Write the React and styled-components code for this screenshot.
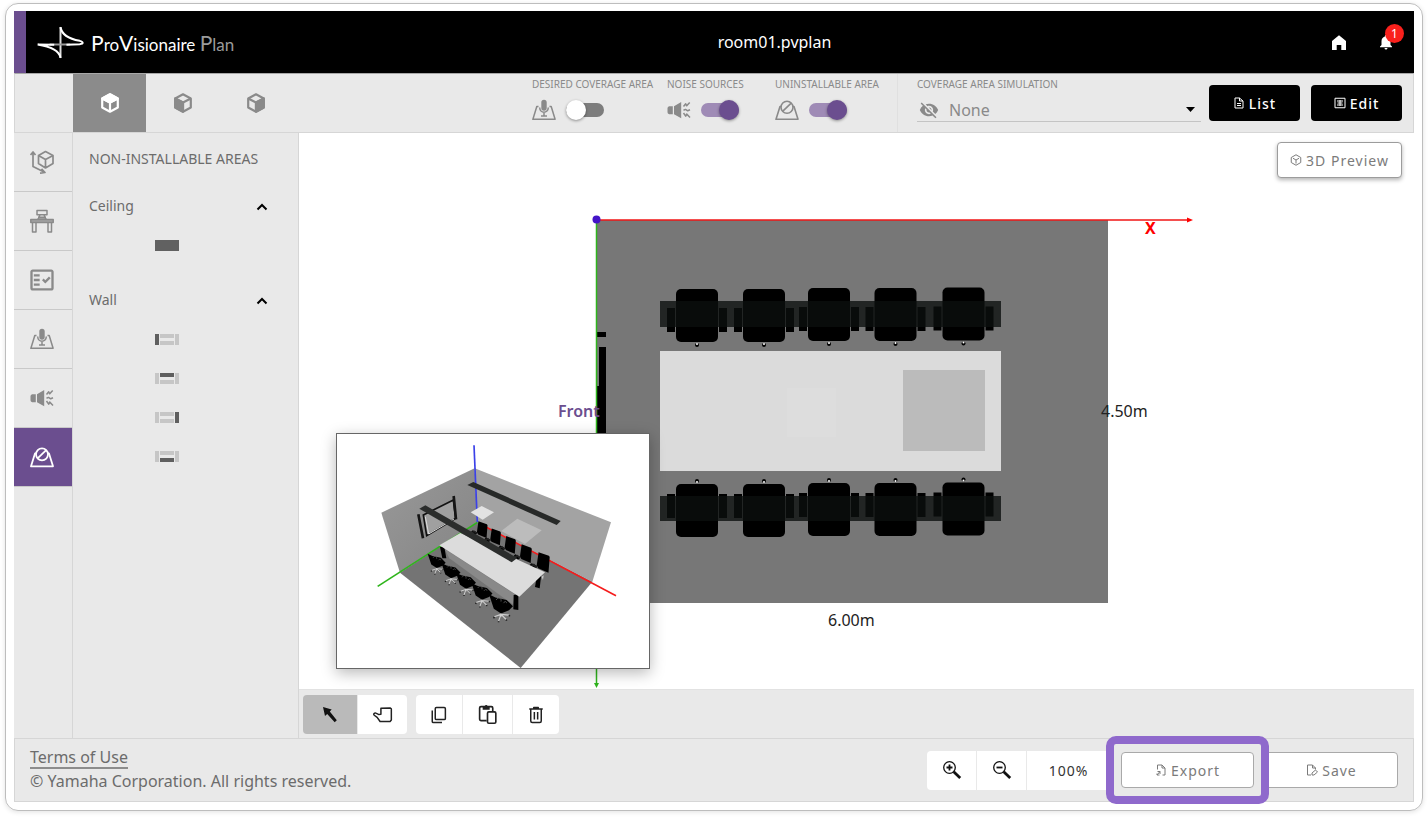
import React, { useState } from "react";
import styled, { createGlobalStyle, css } from "styled-components";
import { MdVisibilityOff, MdNotifications, MdOutlineFactCheck } from "react-icons/md";

const color = {
  purple: "#6b4e8f",
  highlight: "#8f69cc",
  panel: "#e9e9e9",
  line: "#d6d6d6",
  muted: "#8a8a8a",
  text: "#6c6c6c",
};

const GlobalStyle = createGlobalStyle`
  *, *::before, *::after { box-sizing: border-box; }
  body {
    margin: 0;
    background: #fff;
    color: ${color.text};
    font-family: "Noto Sans", "Open Sans", sans-serif;
    font-size: 16px;
  }
  button, input, select { font: inherit; color: inherit; margin: 0; }
  button { cursor: pointer; }
  svg { display: block; flex: none; }
`;

/* ---------- frame ---------- */

const Page = styled.div`
  min-height: 100vh;
  display: flex;
  padding: 3px 5px 7px;
`;

const Frame = styled.div`
  flex: 1;
  min-width: 0;
  display: flex;
  padding: 7px 8px 8px;
  border: 1px solid #bdbdbd;
  border-radius: 13px;
  box-shadow: 0 1px 5px rgba(0, 0, 0, 0.12);
`;

const Shell = styled.div`
  flex: 1;
  min-width: 0;
  display: flex;
  flex-direction: column;
`;

/* ---------- header ---------- */

const Header = styled.header`
  display: flex;
  align-items: center;
  height: 62px;
  background: #000;
  color: #fff;
  border-left: 12px solid ${color.purple};
`;

const Brand = styled.div`
  display: flex;
  align-items: center;
  gap: 7px;
  width: 208px;
  padding-left: 11px;
  font-family: Lato, sans-serif;
  font-size: 17px;
  white-space: nowrap;
`;

const BrandCap = styled.span`
  font-size: 21px;
`;

const BrandSub = styled.span`
  color: #9a9a9a;
`;

const DocTitle = styled.h1`
  flex: 1;
  margin: 0;
  text-align: center;
  font-size: 16px;
  font-weight: 400;
`;

const HeaderActions = styled.div`
  display: flex;
  gap: 27px;
  width: 99px;
  padding-left: 14px;
`;

const HeaderButton = styled.button`
  position: relative;
  display: grid;
  place-items: center;
  width: 20px;
  height: 20px;
  padding: 0;
  border: 0;
  background: none;
`;

const Badge = styled.span`
  position: absolute;
  top: -8px;
  right: -8px;
  width: 19px;
  height: 19px;
  border-radius: 50%;
  background: #f9201c;
  font-size: 12px;
  line-height: 19px;
  text-align: center;
`;

/* ---------- toolbar ---------- */

const Toolbar = styled.div`
  display: flex;
  height: 60px;
  background: ${color.panel};
  border: 1px solid ${color.line};
  border-top-color: #a8a8a8;
`;

const ViewTabs = styled.div`
  display: flex;
  flex: 1;
  padding-left: 58px;
`;

const ViewTab = styled.button`
  display: grid;
  place-items: center;
  width: 73px;
  padding: 0;
  border: 0;
  background: ${(p) => (p.$active ? "#8b8b8b" : "transparent")};
  color: ${(p) => (p.$active ? "#fff" : color.muted)};
`;

const ToggleField = styled.label`
  display: flex;
  flex-direction: column;
  gap: 7px;
  width: ${(p) => p.$width}px;
  padding-top: 3px;
  color: ${color.muted};
`;

const Caption = styled.span`
  font-size: 10px;
  line-height: 14px;
  white-space: nowrap;
`;

const ToggleRow = styled.span`
  display: flex;
  align-items: center;
  gap: 10px;
  height: 24px;
`;

const Switch = styled.input`
  appearance: none;
  position: relative;
  width: 38px;
  height: 20px;
  &::before {
    content: "";
    position: absolute;
    inset: 3px 0;
    border-radius: 7px;
    background: #7d7d7d;
  }
  &::after {
    content: "";
    position: absolute;
    top: 0;
    left: 0;
    width: 20px;
    height: 20px;
    border-radius: 50%;
    background: #fff;
    box-shadow: 0 1px 3px rgba(0, 0, 0, 0.4);
  }
  &:checked::before { background: #9f8bb6; }
  &:checked::after { left: 18px; background: ${color.purple}; }
`;

const Simulation = styled.div`
  display: flex;
  align-items: center;
  gap: 11px;
  padding: 0 11px 0 19px;
  border-left: 1px solid #e0e0e0;
`;

const SelectField = styled.label`
  align-self: flex-start;
  display: flex;
  flex-direction: column;
  gap: 7px;
  width: 284px;
  padding-top: 3px;
  margin-right: -3px;
  color: ${color.muted};
`;

const SelectBox = styled.span`
  display: flex;
  align-items: center;
  gap: 10px;
  height: 24px;
  padding: 0 6px 0 2px;
  border-bottom: 1px solid #c4c4c4;
`;

const Select = styled.select`
  appearance: none;
  flex: 1;
  padding: 0;
  border: 0;
  background: none;
  font-size: 16px;
`;

const buttonText = css`
  display: flex;
  align-items: center;
  justify-content: center;
  gap: 4px;
  padding: 0;
  border-radius: 4px;
  font-size: 14px;
  letter-spacing: 1px;
`;

const DarkButton = styled.button`
  ${buttonText}
  width: 91px;
  height: 36px;
  border: 0;
  background: #000;
  color: #fff;
  font-weight: 500;
`;

const OutlineButton = styled.button`
  ${buttonText}
  width: ${(p) => p.$width}px;
  height: 36px;
  border: 1px solid #a9a9a9;
  background: #fff;
  color: #7b7b7b;
`;

/* ---------- body ---------- */

const Body = styled.div`
  flex: 1;
  min-height: 0;
  display: flex;
  background: ${color.panel};
`;

const Rail = styled.nav`
  width: 59px;
  border-right: 1px solid ${color.line};
`;

const RailButton = styled.button`
  display: grid;
  place-items: center;
  width: 58px;
  height: 59px;
  padding: 0 2px 0 0;
  border: 0;
  border-bottom: 1px solid #c9c9c9;
  background: ${(p) => (p.$active ? color.purple : "transparent")};
  color: ${(p) => (p.$active ? "#fff" : color.muted)};
`;

const Panel = styled.aside`
  width: 226px;
  padding: 0 16px;
  border-right: 1px solid ${color.line};
`;

const PanelTitle = styled.h2`
  margin: 0;
  font-size: 14px;
  font-weight: 400;
  line-height: 52px;
  white-space: nowrap;
`;

const Section = styled.section`
  padding-bottom: 15px;
`;

const SectionHead = styled.button`
  display: flex;
  align-items: center;
  justify-content: space-between;
  width: 100%;
  height: 40px;
  padding: 0 14px 0 0;
  border: 0;
  background: none;
  font-size: 14px;
`;

const Shape = styled.button`
  display: grid;
  place-items: center;
  width: 100%;
  height: 39px;
  padding: 2px 38px 0 0;
  border: 0;
  background: none;
`;

const Work = styled.main`
  flex: 1;
  min-width: 0;
  display: flex;
  flex-direction: column;
`;

const Canvas = styled.div`
  position: relative;
  flex: 1;
  min-height: 0;
  display: flex;
  overflow: hidden;
  background: #fff;
`;

const Plan = styled.svg`
  flex: 1;
  min-width: 0;
  height: 556px;
  margin: auto;
  font-size: 16px;
`;

const PreviewToggle = styled(OutlineButton)`
  position: absolute;
  top: 9px;
  right: 12px;
  border-color: #9c9c9c;
  box-shadow: 0 2px 4px rgba(0, 0, 0, 0.3);
`;

const Preview = styled.figure`
  position: absolute;
  left: 37px;
  bottom: 20px;
  margin: 0;
  border: 1px solid #666;
  background: #fff;
  box-shadow: 0 4px 14px rgba(0, 0, 0, 0.28);
`;

const EditBar = styled.div`
  display: flex;
  gap: 9px;
  padding: 5px 4px 4px;
  border-top: 1px solid #e2e2e2;
`;

const Group = styled.div`
  display: flex;
  gap: 1px;
  border-radius: 4px;
  overflow: hidden;
`;

const Tool = styled.button`
  display: grid;
  place-items: center;
  width: ${(p) => p.$width}px;
  height: 39px;
  padding: 0;
  border: 0;
  background: ${(p) => (p.$active ? "#bababa" : "#fff")};
  color: #222;
`;

/* ---------- footer ---------- */

const Footer = styled.footer`
  display: flex;
  align-items: center;
  justify-content: space-between;
  height: 64px;
  padding: 0 15px;
  background: ${color.panel};
  border: 1px solid ${color.line};
`;

const Legal = styled.div`
  line-height: 24px;
`;

const Terms = styled.a`
  display: block;
  width: fit-content;
  line-height: 20px;
  border-bottom: 2px solid #8c8c8c;
  color: inherit;
  text-decoration: none;
`;

const FooterActions = styled.div`
  display: flex;
  align-items: center;
  gap: 11px;
`;

const ZoomValue = styled.output`
  width: 83px;
  background: #fff;
  color: #333;
  font-size: 14px;
  line-height: 39px;
  letter-spacing: 1px;
  text-align: center;
`;

const Highlight = styled.div`
  position: relative;
  &::after {
    content: "";
    position: absolute;
    inset: -16px -15px;
    border: 8px solid ${color.highlight};
    border-radius: 10px;
    pointer-events: none;
  }
`;

/* ---------- icons ---------- */

const Icon = ({ size = 24, stroke = 2, children }) => (
  <svg width={size} height={size} viewBox="0 0 24 24" fill="none" stroke="currentColor" strokeWidth={stroke} strokeLinejoin="round">
    {children}
  </svg>
);

const Cube = ({ face }) => (
  <Icon size={22} stroke={2.4}>
    <path d="M12 2.500 20.500 7v10L12 21.500 3.500 17V7z" />
    <path d="M3.500 7 12 11.500 20.500 7M12 11.500v10" />
    {face === "top" && <path d="M12 2.500 20.500 7 12 11.500 3.500 7z" fill="currentColor" />}
    {face === "left" && <path d="M3.500 7 12 11.500v10L3.500 17z" fill="currentColor" />}
    {face === "right" && <path d="M20.500 7 12 11.500v10l8.500-4.500z" fill="currentColor" />}
  </Icon>
);

const CubeAxes = () => (
  <Icon stroke={1.7}>
    <path d="M15.500 1.500 23 5.500v8L15.500 18 8.500 13.500v-8zM8.500 5.500l7 4 7.500-4M15.500 9.500V18" />
    <path d="M3 3v13.500l11 5.500M.5 5 3 2l2.500 3M11.500 18.800 15 22.500l-5 .7" />
  </Icon>
);

const Desk = () => (
  <Icon stroke={1.5}>
    <path d="M7 1.500h10v4.200H7zM10 6l-2 4h8l-2-4M8 8.200h8" />
    <path d="M.8 10.500h22.400v3H.8zM2.500 13.500h3.500V23H2.500zM18 13.500h3.500V23H18z" />
    <path d="M1 12h22" />
  </Icon>
);

const Microphone = () => (
  <Icon stroke={1.5}>
    <path d="M6.500 8.500H4.800L.9 21.300h22.200L19.200 8.500h-1.700" />
    <rect x="9.300" y="1.700" width="5.400" height="11" rx="2.700" fill="currentColor" stroke="none" />
    <path d="M7.700 9.500c0 6.200 8.600 6.200 8.600 0M12 14.500V18M9 18h6" />
  </Icon>
);

const Noise = () => (
  <Icon stroke={1.5}>
    <path d="M5.800 8.200v8H2.200a2 2 0 0 1-1.700-2v-4a2 2 0 0 1 1.700-2zM7 8.200 14.200 4v16.200L7 16.200z" fill="currentColor" stroke="none" />
    <path d="m16.500 8.500 2.200-2.700 1 2 3-3.300M16.500 12.300l2-.9 2.200 1.400 2.300-1M16.500 15l2.200 3.200 1-2.200 3.300 3.500" />
  </Icon>
);

const NoInstall = ({ stroke = 1.6 }) => (
  <Icon stroke={stroke}>
    <path d="M6.300 8.500H5L1 21.300h22L19 8.500h-1.300" />
    <circle cx="12" cy="9.300" r="6" />
    <path d="m7.800 13.200 8.400-8" />
  </Icon>
);

const HomeIcon = () => (
  <svg width="16" height="17" viewBox="0 0 16 17" fill="#fff">
    <path d="M8 1.300 15 7v9h-4.700v-5H5.700v5H1V7z" />
  </svg>
);

const ArrowDown = () => (
  <svg width="9" height="5" viewBox="0 0 9 5"><path d="M0 0h9L4.500 5z" fill="#000" /></svg>
);

const Chevron = () => (
  <svg width="12" height="12" viewBox="0 -4 12 12" fill="none" stroke="#000" strokeWidth="2">
    <path d="m1.500 6.500 4.500-4.500 4.500 4.500" />
  </svg>
);

const ListIcon = () => (
  <Icon size={12}>
    <path d="M4 2h9l7 6v14H4zM13 2v6h7M8 13h8M8 17h8" />
  </Icon>
);

const EditIcon = () => (
  <Icon size={12}>
    <path d="M2 2.500h20v19H2zM6 8h12M6 16h12M12 6v12M7 12h10" />
  </Icon>
);

const ExportIcon = () => (
  <Icon size={12}>
    <path d="M5 11V2h9l6 6v14h-5M14 2v6h6M4 22l6-7M5 15h5v5M4 19v3h5" />
  </Icon>
);

const SaveIcon = () => (
  <Icon size={12}>
    <path d="M10 22H3V2h10l6 6v3M13 2v6h6M12 22v-4l7-6 4 4-7 6z" />
  </Icon>
);

const CursorIcon = () => (
  <svg width="16" height="18" viewBox="0 0 16 18" fill="#111">
    <path d="M1 1 9.700 3.500 7.800 5.600 14.800 14.200 12.700 16.200 5.200 8.100 3 10z" />
  </svg>
);

const HandIcon = () => (
  <Icon size={20} stroke={1.800}>
    <path d="M9.500 7.500V3.800l11-.3 1.500 1V18l-1.500 1.800H8.500l-3.500-5-3.500-2.500c-1.500-1.500.5-3.300 2-2.500l3 1.500 3-.3z" />
  </Icon>
);

const CopyIcon = () => (
  <Icon size={18}>
    <rect x="7" y="2" width="13.500" height="16" rx="1.500" />
    <path d="M3 6v14.500q0 1.500 1.500 1.500H16" />
  </Icon>
);

const PasteIcon = () => (
  <Icon size={21} stroke={1.900}>
    <path d="M11 19H4.500Q3 19 3 17.500v-13Q3 3 4.500 3h12Q18 3 18 4.500V8" />
    <path d="M6.500 2.500h2L10 1.200h1l1.500 1.300h2v4h-8z" fill="currentColor" stroke="none" />
    <rect x="12" y="9" width="9.500" height="13" rx="1.500" />
  </Icon>
);

const TrashIcon = () => (
  <Icon size={18}>
    <path d="M3 4h18M9 4V2h6v2M5 4v16q0 2 2 2h10q2 0 2-2V4M9.800 8v10M14.200 8v10" />
  </Icon>
);

const Magnifier = ({ plus }) => (
  <svg width="20" height="20" viewBox="0 0 20 20" fill="none" stroke="#111">
    <circle cx="7.500" cy="7.500" r="5.800" strokeWidth="1.300" />
    <path d="m11.700 11.700 6.500 6.300" strokeWidth="2.800" />
    <path d={plus ? "M4.500 7.500h6M7.500 4.500v6" : "M4.500 7.500h6"} strokeWidth="1.800" />
  </svg>
);

const PreviewCube = () => (
  <Icon size={12}>
    <path d="M12 1.500 21.500 7v10L12 22.500 2.500 17V7zM6 8.500l6 3.500 6-3.500M12 12v7" />
  </Icon>
);

const LogoMark = () => (
  <svg width="47" height="33" viewBox="112 76 142 98" fill="none" stroke="#fff" strokeWidth="6">
    <path d="M183 78v94" stroke="#ddd" />
    <path d="M150 131h62" stroke="#999" />
    <path d="M183 79c4 24 30 36 58 41 12 3 12 9 0 10l-40 2" />
    <path d="M183 171c-4-22-30-34-69-40l50 1" />
  </svg>
);

const WallShape = ({ active }) => {
  const fill = (side) => (active === side ? "#5f5f5f" : "#c6c6c6");
  return (
    <svg width="24" height="11" viewBox="0 0 24 11">
      <rect x="0" y="0" width="4" height="11" fill={fill("left")} />
      <rect x="5" y="0" width="14" height="4" fill={fill("top")} />
      <rect x="5" y="7" width="14" height="4" fill={fill("bottom")} />
      <rect x="20" y="0" width="4" height="11" fill={fill("right")} />
    </svg>
  );
};

const CeilingShape = () => (
  <svg width="24" height="11" viewBox="0 0 24 11"><rect width="24" height="11" fill="#616161" /></svg>
);

/* ---------- floor plan ---------- */

const topChairs = [[697, 289], [764, 289], [829, 288], [895.5, 288], [963.5, 287.5]];
const bottomChairs = [[697, 484], [764, 484], [829, 483], [895.5, 483], [963.5, 482.5]];

const Chair = ({ x, y, flip }) => (
  <g transform={`translate(${x} ${y})`}>
    <path d={flip ? "M-30 10h8v24h-8zM22 10h8v24h-8z" : "M-30 19h8v24h-8zM22 19h8v24h-8z"} />
    <rect x="-21" y="0" width="42" height="53" rx="5" />
    <circle cx="0" cy={flip ? -3 : 56} r="2" />
    <circle cx="0" cy={flip ? -2 : 55} r="1" fill="#fff" />
  </g>
);

const FloorPlan = () => (
  <Plan viewBox="299 133 1115 556" role="img" aria-label="Room plan">
    <rect x="596" y="220" width="512" height="383" fill="#777" />
    <path d="M597 332h9v5h-9zM599 347h7v240h-9V386h2z" />
    {topChairs.map(([x, y]) => <Chair key={x} x={x} y={y} />)}
    {bottomChairs.map(([x, y]) => <Chair key={x} x={x} y={y} flip />)}
    <rect x="660" y="301" width="341" height="26" fill="#0c0f0e" fillOpacity=".79" />
    <rect x="660" y="496" width="341" height="25" fill="#0c0f0e" fillOpacity=".79" />
    <rect x="660" y="351" width="341" height="120" fill="#dbdbdb" />
    <rect x="787" y="388" width="49" height="49" fill="#dddddd" />
    <rect x="903" y="370" width="82" height="81" fill="#bbb" />
    <path d="M596.500 220v464" stroke="#2fb51c" strokeWidth="1.500" />
    <path d="m594 683 2.500 5 2.500-5z" fill="#2fb51c" />
    <path d="M596 220h592" stroke="#f01414" strokeWidth="1.500" />
    <path d="m1187 217.500 6 2.500-6 2.500z" fill="#f00" />
    <circle cx="596.500" cy="219.500" r="4" fill="#4314c8" />
    <text x="1145" y="234" fill="#f00" fontWeight="700">X</text>
    <text x="558" y="417" fill={color.purple} fontWeight="600">Front</text>
    <text x="1101" y="417" fill="#222">4.50m</text>
    <text x="828" y="626" fill="#222">6.00m</text>
  </Plan>
);

/* ---------- perspective view ---------- */

const backRow = [[457, 312, 0.9], [497, 334, 0.9], [541, 358, 0.95], [588, 384, 1], [640, 410, 1.1]];
const frontRow = [[320, 404, 0.9], [363, 433, 0.95], [408, 463, 1], [456, 495, 1.05], [513, 532, 1.2]];

const Scene = () => (
  <svg width="312" height="234" viewBox="21 27 936 702" role="img" aria-label="3D room view">
    <defs>
      <linearGradient id="leftWall" x1="0" y1="0" x2="1" y2="1">
        <stop offset="0" stopColor="#999" />
        <stop offset="1" stopColor="#848484" />
      </linearGradient>
    </defs>
    <path d="M434 130 154 263l56 180 232-151z" fill="url(#leftWall)" />
    <path d="m434 130 409 162-56 178-345-178z" fill="#a3a3a3" />
    <path d="m442 292 345 178-215 259-362-286z" fill="#747474" />
    <path d="m514 318 48-37 73 35-50 41z" fill="#bcbcbc" />
    <path d="m432 61 10 231" stroke="#3b41e8" strokeWidth="5" />
    <path d="M442 292 143 484" stroke="#2fb51c" strokeWidth="5" />
    <path d="m455 299 403 213" stroke="#f51c1c" strokeWidth="5" />
    <path d="m422 262 33-19 37 19-34 22z" fill="#e2e2e2" />
    <path d="m280 270 90-45 7 55-87 52z" fill="#a0a0a0" stroke="#111" strokeWidth="5" />
    <path d="m286 275 10 52 76-45" fill="none" stroke="#ddd" strokeWidth="3" />
    <path d="m265 268 14 72M371 213l7 70" stroke="#151515" strokeWidth="8" />
    {backRow.map(([x, y, s]) => (
      <g key={x} transform={`translate(${x} ${y}) scale(${s})`}>
        <path d="m-13-26 28 10c2 2 3 4 2 8l-3 38-28-12-4-8z" />
        <path d="m-16 12-16-8-6 6 14 10z" />
        <path d="m-38 14 12-6 8 8" fill="none" stroke="#222" strokeWidth="5" />
      </g>
    ))}
    <path d="m344 372 14 28 190 138 10-28z" fill="#898989" />
    <path d="M330 366h13l6 34h-12zM551 510l14-3v48l-15-2zM620 456l14-8-5 42-14-4z" />
    <path d="m328 361 63-37 254 118-77 73z" fill="#dcdcdc" />
    <path d="m635 455 6-4-2 14z" fill="#ccc" />
    {frontRow.map(([x, y, s]) => (
      <g key={x} transform={`translate(${x} ${y}) scale(${s})`}>
        <path d="m0 30-17 6M0 30l20 2M0 30l-6 17M0 30l13 13M0 20v16" stroke="#cfcfcf" strokeWidth="3" />
        <path d="m-30-20 16 8 28 6 16 16-10 10-20 8-18-12z" />
        <path d="M-12-6c6-10 14-4 12 4M6 2c4-6 8-4 8 0" fill="none" stroke="#666" strokeWidth="2" />
        <path d="m-17 36-1 4M20 32l2 3M-6 47v3M13 43l1 3" stroke="#222" strokeWidth="4" />
      </g>
    ))}
    <path d="m412 180 18-9 262 117-12 12z" fill="#272928" />
    <path d="m268 251 18-10 276 158-17 13z" fill="#2b2d2c" />
  </svg>
);

/* ---------- app ---------- */

const toggles = [
  { label: "DESIRED COVERAGE AREA", icon: <Microphone />, width: 135, on: false },
  { label: "NOISE SOURCES", icon: <Noise />, width: 108, on: true },
  { label: "UNINSTALLABLE AREA", icon: <NoInstall />, width: 122, on: true },
];

const railItems = [
  { name: "Room", icon: <CubeAxes /> },
  { name: "Furniture", icon: <Desk /> },
  { name: "Devices", icon: <MdOutlineFactCheck size={28} /> },
  { name: "Coverage", icon: <Microphone /> },
  { name: "Noise", icon: <Noise /> },
  { name: "Non-installable", icon: <NoInstall stroke={1.8} />, active: true },
];

export default function App() {
  const [view, setView] = useState("top");
  return (
    <Page>
      <GlobalStyle />
      <Frame>
        <Shell>
          <Header>
            <Brand>
              <LogoMark />
              <span>
                <BrandCap>P</BrandCap>ro<BrandCap>V</BrandCap>isionaire{" "}
                <BrandSub><BrandCap>P</BrandCap>lan</BrandSub>
              </span>
            </Brand>
            <DocTitle>room01.pvplan</DocTitle>
            <HeaderActions>
              <HeaderButton aria-label="Home"><HomeIcon /></HeaderButton>
              <HeaderButton aria-label="Notifications">
                <MdNotifications size={18} />
                <Badge>1</Badge>
              </HeaderButton>
            </HeaderActions>
          </Header>

          <Toolbar>
            <ViewTabs>
              {["top", "left", "right"].map((face) => (
                <ViewTab key={face} $active={view === face} aria-label={face} onClick={() => setView(face)}>
                  <Cube face={face} />
                </ViewTab>
              ))}
            </ViewTabs>
            {toggles.map((t) => (
              <ToggleField key={t.label} $width={t.width}>
                <Caption>{t.label}</Caption>
                <ToggleRow>
                  {t.icon}
                  <Switch type="checkbox" defaultChecked={t.on} />
                </ToggleRow>
              </ToggleField>
            ))}
            <Simulation>
              <SelectField>
                <Caption>COVERAGE AREA SIMULATION</Caption>
                <SelectBox>
                  <MdVisibilityOff size={20} />
                  <Select defaultValue="None">
                    <option>None</option>
                  </Select>
                  <ArrowDown />
                </SelectBox>
              </SelectField>
              <DarkButton><ListIcon />List</DarkButton>
              <DarkButton><EditIcon />Edit</DarkButton>
            </Simulation>
          </Toolbar>

          <Body>
            <Rail>
              {railItems.map((item) => (
                <RailButton key={item.name} $active={item.active} aria-label={item.name}>
                  {item.icon}
                </RailButton>
              ))}
            </Rail>
            <Panel>
              <PanelTitle>NON-INSTALLABLE AREAS</PanelTitle>
              <Section>
                <SectionHead>Ceiling<Chevron /></SectionHead>
                <Shape aria-label="Ceiling area"><CeilingShape /></Shape>
              </Section>
              <Section>
                <SectionHead>Wall<Chevron /></SectionHead>
                {["left", "top", "right", "bottom"].map((side) => (
                  <Shape key={side} aria-label={`Wall ${side}`}><WallShape active={side} /></Shape>
                ))}
              </Section>
            </Panel>
            <Work>
              <Canvas>
                <FloorPlan />
                <PreviewToggle $width={125}><PreviewCube />3D Preview</PreviewToggle>
                <Preview><Scene /></Preview>
              </Canvas>
              <EditBar>
                <Group>
                  <Tool $width={54} $active aria-label="Select"><CursorIcon /></Tool>
                  <Tool $width={49} aria-label="Pan"><HandIcon /></Tool>
                </Group>
                <Group>
                  <Tool $width={46} aria-label="Copy"><CopyIcon /></Tool>
                  <Tool $width={49} aria-label="Paste"><PasteIcon /></Tool>
                  <Tool $width={46} aria-label="Delete"><TrashIcon /></Tool>
                </Group>
              </EditBar>
            </Work>
          </Body>

          <Footer>
            <Legal>
              <Terms href="#terms">Terms of Use</Terms>
              © Yamaha Corporation. All rights reserved.
            </Legal>
            <FooterActions>
              <Group>
                <Tool $width={49} aria-label="Zoom in"><Magnifier plus /></Tool>
                <Tool $width={49} aria-label="Zoom out"><Magnifier /></Tool>
                <ZoomValue>100%</ZoomValue>
              </Group>
              <Highlight>
                <OutlineButton $width={133}><ExportIcon />Export</OutlineButton>
              </Highlight>
              <OutlineButton $width={133}><SaveIcon />Save</OutlineButton>
            </FooterActions>
          </Footer>
        </Shell>
      </Frame>
    </Page>
  );
}
